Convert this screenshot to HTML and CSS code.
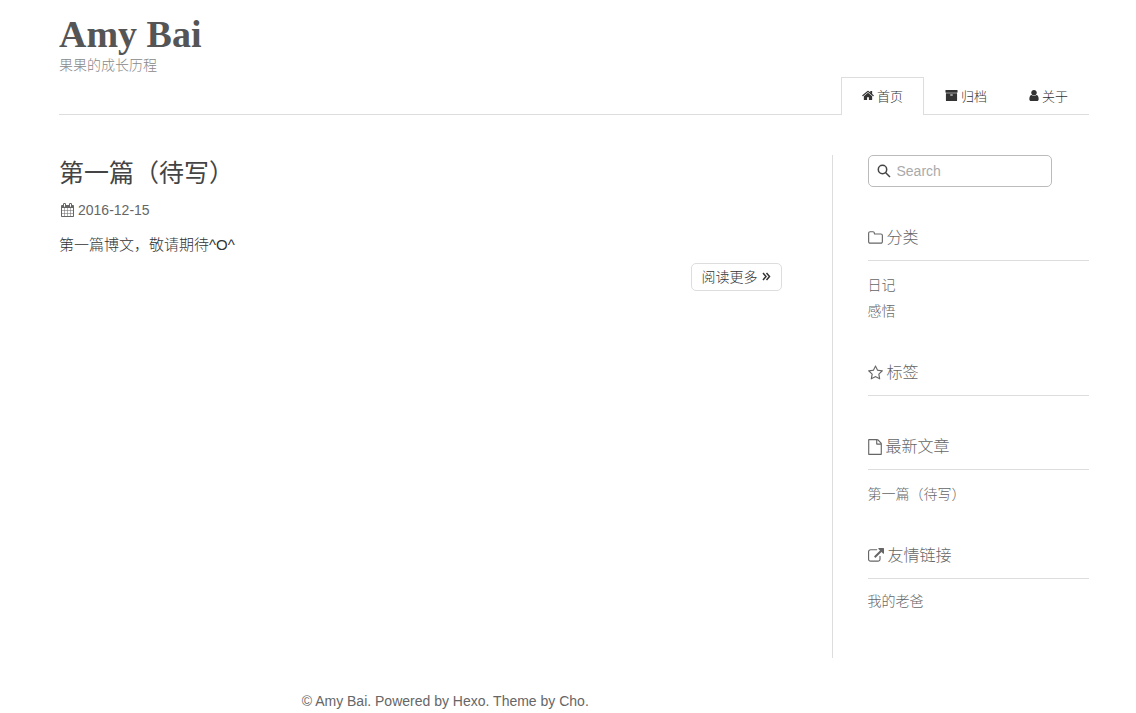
FILE: index.html
```html
<!DOCTYPE html>
<html lang="zh-CN">
<head>
    <meta charset="UTF-8">
    <meta name="viewport" content="width=device-width, initial-scale=1.0">
    <title>Amy Bai</title>
    <link rel="stylesheet" href="styles.css">
</head>
<body>
    <div class="container">
        <header class="header">
            <h1 class="logo"><a href="#">Amy Bai</a></h1>
            <p class="subtitle">果果的成长历程</p>
            <nav class="nav">
                <a class="current" href="#"><svg width="12" height="13" viewBox="64 0 1664 1792"><path d="M1472 992v480q0 26-19 45t-45 19h-384v-384h-256v384h-384q-26 0-45-19t-19-45v-480q0-1 .5-3t.5-3l575-474 575 474q1 2 1 6zm223-69l-62 74q-8 9-21 11h-3q-13 0-21-7l-692-577-692 577q-12 8-24 7-13-2-21-11l-62-74q-8-10-7-23.5t11-21.5l719-599q32-26 76-26t76 26l244 204v-195q0-14 9-23t23-9h192q14 0 23 9t9 23v408l219 182q10 8 11 21.5t-7 23.5z"/></svg>首页</a>
                <a href="#"><svg width="13" height="13" viewBox="0 0 1792 1792"><path d="M1088 832q0-26-19-45t-45-19h-256q-26 0-45 19t-19 45 19 45 45 19h256q26 0 45-19t19-45zm576-192v960q0 26-19 45t-45 19h-1408q-26 0-45-19t-19-45v-960q0-26 19-45t45-19h1408q26 0 45 19t19 45zm64-448v256q0 26-19 45t-45 19h-1536q-26 0-45-19t-19-45v-256q0-26 19-45t45-19h1536q26 0 45 19t19 45z"/></svg>归档</a>
                <a href="#"><svg width="10" height="13" viewBox="256 0 1280 1792"><path d="M1536 1399q0 109-62.5 187t-150.5 78h-854q-88 0-150.5-78t-62.5-187q0-85 8.5-160.5t31.5-152 58.5-131 94-89 134.5-34.5q131 128 313 128t313-128q76 0 134.5 34.5t94 89 58.5 131 31.5 152 8.5 160.5zm-256-887q0 159-112.5 271.5t-271.5 112.5-271.5-112.5-112.5-271.5 112.5-271.5 271.5-112.5 271.5 112.5 112.5 271.5z"/></svg>关于</a>
            </nav>
        </header>
        <div class="content">
            <main class="main">
                <article class="post">
                    <h2 class="post-title"><a href="#">第一篇（待写）</a></h2>
                    <div class="post-meta"><svg width="13" height="14" viewBox="64 0 1664 1792"><path d="M192 1664h288v-288h-288v288zm352 0h320v-288h-320v288zm-352-352h288v-320h-288v320zm352 0h320v-320h-320v320zm-352-384h288v-288h-288v288zm736 736h320v-288h-320v288zm-384-736h320v-288h-320v288zm768 736h288v-288h-288v288zm-384-352h320v-320h-320v320zm-352-864v-288q0-13-9.5-22.5t-22.5-9.5h-64q-13 0-22.5 9.5t-9.5 22.5v288q0 13 9.5 22.5t22.5 9.5h64q13 0 22.5-9.5t9.5-22.5zm736 864h288v-320h-288v320zm-384-384h320v-288h-320v288zm384 0h288v-288h-288v288zm32-480v-288q0-13-9.5-22.5t-22.5-9.5h-64q-13 0-22.5 9.5t-9.5 22.5v288q0 13 9.5 22.5t22.5 9.5h64q13 0 22.5-9.5t9.5-22.5zm384-64v1280q0 52-38 90t-90 38h-1408q-52 0-90-38t-38-90v-1280q0-52 38-90t90-38h128v-96q0-66 47-113t113-47h64q66 0 113 47t47 113v96h384v-96q0-66 47-113t113-47h64q66 0 113 47t47 113v96h128q52 0 90 38t38 90z"/></svg><time datetime="2016-12-15">2016-12-15</time></div>
                    <p class="post-content">第一篇博文，敬请期待^O^</p>
                    <a class="readmore" href="#">阅读更多<svg class="stroke" width="9" height="14" viewBox="0 0 9 14"><path d="M1 4l3 3.500-3 3.500M4.500 4l3 3.500-3 3.500"/></svg></a>
                </article>
            </main>
            <aside class="sidebar">
                <form class="search">
                    <svg class="stroke" width="14" height="14" viewBox="0 0 14 14"><circle cx="5.500" cy="5.500" r="4.200"/><path d="M8.500 8.500l4.500 4.500"/></svg>
                    <input type="search" placeholder="Search" aria-label="Search">
                </form>
                <section class="widget">
                    <h3><svg width="15" height="16" viewBox="64 0 1664 1792"><path d="M1600 1312v-704q0-40-28-68t-68-28h-704q-40 0-68-28t-28-68v-64q0-40-28-68t-68-28h-320q-40 0-68 28t-28 68v960q0 40 28 68t68 28h1216q40 0 68-28t28-68zm128-704v704q0 92-66 158t-158 66h-1216q-92 0-158-66t-66-158v-960q0-92 66-158t158-66h320q92 0 158 66t66 158v32h672q92 0 158 66t66 158z"/></svg>分类</h3>
                    <ul>
                        <li><a href="#">日记</a></li>
                        <li><a href="#">感悟</a></li>
                    </ul>
                </section>
                <section class="widget">
                    <h3><svg width="15" height="16" viewBox="64 0 1664 1792"><path d="M1201 1004l306-297-422-62-189-382-189 382-422 62 306 297-73 421 378-199 377 199zm527-357q0 22-26 48l-363 354 86 500q1 7 1 20 0 50-41 50-19 0-40-12l-449-236-449 236q-22 12-40 12-21 0-31.500-14.500t-10.500-35.500q0-6 2-20l86-500-364-354q-25-27-25-48 0-37 56-46l502-73 225-455q19-41 49-41t49 41l225 455 502 73q56 9 56 46z"/></svg>标签</h3>
                </section>
                <section class="widget">
                    <h3><svg width="14" height="16" viewBox="128 0 1536 1792"><path d="M1596 380q28 28 48 76t20 88v1152q0 40-28 68t-68 28h-1344q-40 0-68-28t-28-68v-1600q0-40 28-68t68-28h896q40 0 88 20t76 48zm-444-244v376h376q-10-29-22-41l-313-313q-12-12-41-22zm384 1528v-1024h-416q-40 0-68-28t-28-68v-416h-768v1536h1280z"/></svg>最新文章</h3>
                    <ul>
                        <li><a href="#">第一篇（待写）</a></li>
                    </ul>
                </section>
                <section class="widget links">
                    <h3><svg width="16" height="16" viewBox="0 0 1792 1792"><path d="M1408 928v320q0 119-84.500 203.500t-203.500 84.500h-832q-119 0-203.500-84.500t-84.500-203.500v-832q0-119 84.500-203.500t203.500-84.500h704q14 0 23 9t9 23v64q0 14-9 23t-23 9h-704q-66 0-113 47t-47 113v832q0 66 47 113t113 47h832q66 0 113-47t47-113v-320q0-14 9-23t23-9h64q14 0 23 9t9 23zm384-864v512q0 26-19 45t-45 19-45-19l-176-176-652 652q-10 10-23 10t-23-10l-114-114q-10-10-10-23t10-23l652-652-176-176q-19-19-19-45t19-45 45-19h512q26 0 45 19t19 45z"/></svg>友情链接</h3>
                    <ul>
                        <li><a href="#">我的老爸</a></li>
                    </ul>
                </section>
            </aside>
        </div>
        <footer class="footer">© <a href="#">Amy Bai.</a> Powered by <a href="#">Hexo.</a> Theme by <a href="#">Cho.</a></footer>
    </div>
</body>
</html>
```
FILE: styles.css
```css
* {
    box-sizing: border-box;
}
body {
    margin: 0;
    font-family: "Liberation Sans", "Noto Sans CJK SC", sans-serif;
    font-size: 14px;
    font-weight: 300;
    color: #333;
    background-color: #fff;
}
h1, h2, h3, p, ul {
    margin: 0;
    padding: 0;
}
a {
    color: inherit;
    text-decoration: none;
}
svg {
    flex: none;
    fill: currentColor;
}
.stroke {
    fill: none;
    stroke: currentColor;
    stroke-width: 1.5;
}
.container {
    padding: 0 47px 0 59px;
}

/* header */
.header {
    display: flex;
    flex-direction: column;
    padding-top: 14px;
    border-bottom: 1px solid #ddd;
}
.logo {
    font-family: "Liberation Serif", serif;
    font-size: 38px;
    font-weight: bold;
    line-height: 40px;
    color: #555;
}
.subtitle {
    line-height: 23px;
    color: #888;
}
.nav {
    display: flex;
    align-self: flex-end;
    margin-bottom: -1px;
    font-size: 13px;
}
.nav a {
    display: flex;
    align-items: center;
    gap: 3px;
    height: 38px;
    padding: 0 20px 3px;
    border: 1px solid transparent;
    border-bottom: 0;
}
.nav .current {
    border-color: #ddd;
    background-color: #fff;
}

/* posts */
.content {
    display: flex;
    margin-top: 40px;
}
.main {
    flex: 1;
    padding-right: 50px;
}
.post {
    display: flex;
    flex-direction: column;
}
.post-title {
    font-size: 25px;
    font-weight: normal;
    line-height: 36px;
    color: #444;
}
.post-meta {
    display: flex;
    align-items: center;
    gap: 4px;
    margin-top: 7px;
    padding-left: 2px;
    line-height: 24px;
    color: #666;
}
.post-content {
    margin-top: 10px;
    font-size: 15px;
    line-height: 26px;
}
.readmore {
    display: flex;
    align-items: center;
    align-self: flex-end;
    gap: 4px;
    height: 28px;
    margin-top: 5px;
    padding: 0 10px 2px;
    border: 1px solid #ddd;
    border-radius: 5px;
}

/* sidebar */
.sidebar {
    width: 25%;
    padding: 0 0 44px 35px;
    border-left: 1px solid #ddd;
    color: #666;
}
.search {
    display: flex;
    align-items: center;
    gap: 6px;
    width: 184px;
    max-width: 100%;
    height: 32px;
    margin-bottom: 38px;
    padding: 0 8px;
    border: 1px solid #bbb;
    border-radius: 5px;
    color: #444;
}
.search input {
    flex: 1;
    min-width: 0;
    padding: 0;
    border: 0;
    outline: 0;
    background: none;
    font: inherit;
}
.search input::placeholder {
    color: #aaa;
}
.widget {
    min-height: 38px;
    margin-bottom: 36px;
}
.widget h3 {
    display: flex;
    align-items: center;
    gap: 4px;
    padding-bottom: 10px;
    border-bottom: 1px solid #ddd;
    font-size: 16px;
    font-weight: inherit;
    line-height: 25px;
}
.widget ul {
    padding-top: 11px;
    list-style: none;
    line-height: 26px;
}
.links {
    margin-bottom: 0;
}
.links ul {
    padding-top: 9px;
}

.footer {
    width: 75%;
    margin-top: 32px;
    line-height: 22px;
    text-align: center;
    color: #666;
}
```
